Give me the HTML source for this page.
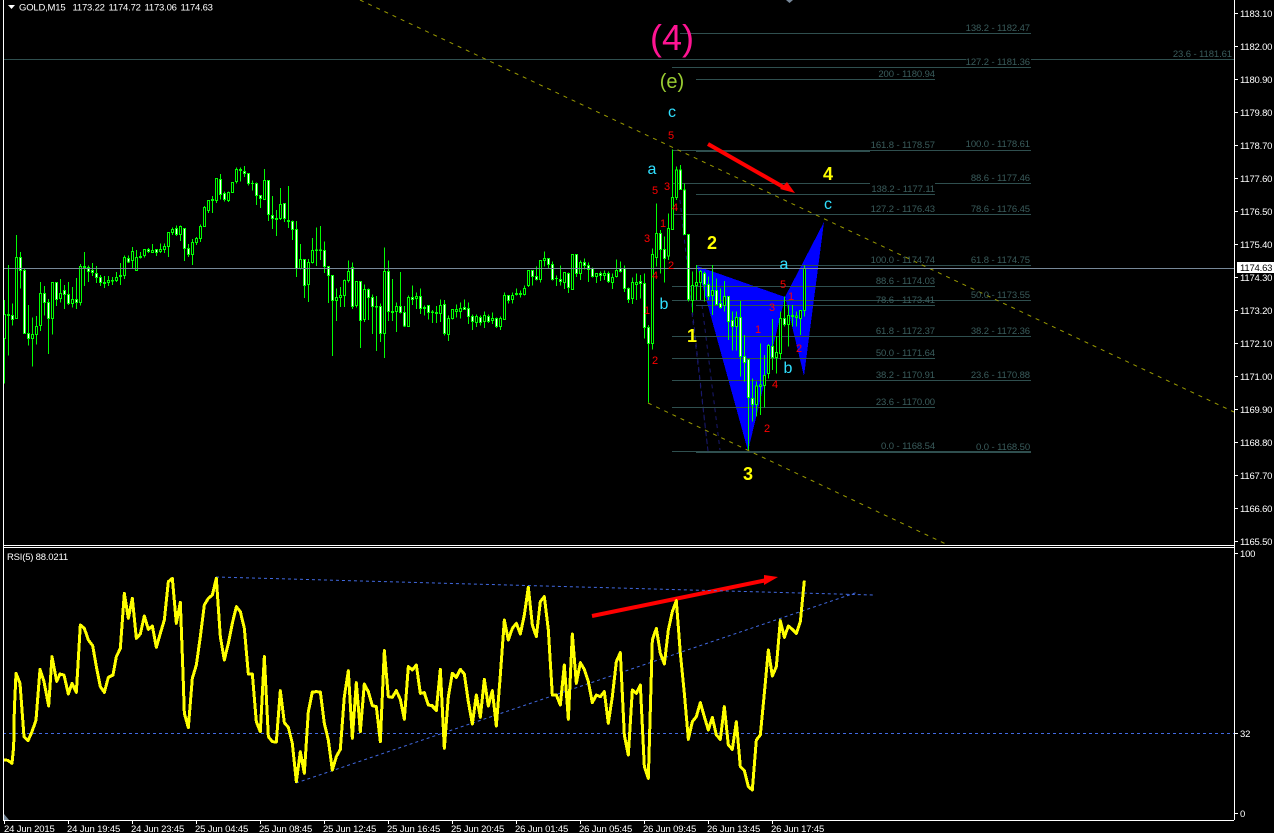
<!DOCTYPE html>
<html><head><meta charset="utf-8"><title>GOLD,M15</title>
<style>
html,body{margin:0;padding:0;background:#000;overflow:hidden}
svg{display:block}
text{font-family:"Liberation Sans",sans-serif;font-size:9.5px;fill:#fff;letter-spacing:-.2px}
.f text{fill:#3a5c5c;text-anchor:end;letter-spacing:-.1px}
.ax text{fill:#fff}
.t text{fill:#fff;letter-spacing:-.15px}
.r text{fill:#f00;font-size:11px;text-anchor:middle;letter-spacing:0}
.c text{fill:#30e0ff;font-size:16px;text-anchor:middle;letter-spacing:0}
.y text{fill:#ff0;font-size:18px;font-weight:bold;text-anchor:middle;letter-spacing:0}
.k path{vector-effect:non-scaling-stroke;stroke:#0f0;stroke-width:1}
</style></head><body>
<svg width="1274" height="833" viewBox="0 0 1274 833" xmlns="http://www.w3.org/2000/svg">
<rect width="1274" height="833" fill="#000"/>
<!-- harmonic pattern -->
<g fill="#0000ff" shape-rendering="crispEdges">
<polygon points="697,266 748,451 785,297"/>
<polygon points="785,297 824,222 804,376"/>
</g>
<g stroke="#191970" stroke-dasharray="4 4" fill="none">
<path d="M680 200L708 451M692 313L708 451M702 305L720 450"/>
</g>
<!-- fib lines -->
<g stroke="#2f4f4f" fill="none" shape-rendering="crispEdges">
<path d="M680 33.5H1031M3 59.5H966M1031 59.5H1234M672 67.5H1031M696 79.5H935M672 150.5H1031M696 151.5H870M672 183.5H870M935 183.5H1031M696 194.5H935M672 214.5H1031M696 265.5H1031M672 286.5H935M672 300.5H1031M696 305.5H935M672 336.5H1031M672 358.5H935M672 380.5H1031M672 407.5H935M672 451.5H1031M696 452.5H1031"/>
</g>
<!-- candles -->
<g class="k" transform="translate(.5,150) scale(1,.33333)" shape-rendering="crispEdges">
<path fill="none" d="M4 450V700M8 345V617M12 460V527M16 255V505M20 306V416M24 357V551M28 465V587M32 503V650M36 498V584M40 396V543M44 408V497M48 447V612M52 397V554M56 397V468M60 387V458M64 405V477M68 396V465M72 411V473M76 384V477M80 342V467M84 306V408M88 346V396M92 339V378M96 348V399M100 375V408M104 378V414M108 378V408M112 381V405M116 366V396M120 339V405M124 316V387M128 316V339M132 291V355M136 300V363M140 306V326M144 298V323M148 294V309M152 282V309M156 298V318M160 280V309M164 280V309M168 247V321M172 232V255M176 226V258M180 226V273M184 235V333M188 282V321M192 267V345M196 261V285M200 223V276M204 168V231M208 150V189M212 138V189M216 85V159M220 72V148M224 124V154M228 124V156M232 97V127M236 52V101M240 52V94M244 48V81M248 70V107M252 91V121M256 97V165M260 136V174M264 57V150M268 91V213M272 138V237M276 180V258M280 114V210M284 160V216M288 108V234M292 211V270M296 213V381M300 282V358M304 328V444M308 327V456M312 264V340M316 232V348M320 228V330M324 274V369M328 348V459"/>
<path fill="#fff" d="M11 497h2V509h-2zM19 322h2V361h-2zM23 361h2V551h-2zM27 551h2V566h-2zM43 430h2V458h-2zM47 458h2V506h-2zM55 397h2V449h-2zM63 422h2V434h-2zM67 433h2V461h-2zM75 448h2V458h-2zM87 352h2V365h-2zM91 361h2V368h-2zM95 370h2V382h-2zM99 382h2V398h-2zM127 325h2V336h-2zM147 298h2V304h-2zM155 299h2V307h-2zM175 235h2V253h-2zM183 235h2V295h-2zM187 295h2V313h-2zM219 88h2V133h-2zM223 130h2V148h-2zM243 64h2V71h-2zM247 70h2V101h-2zM255 100h2V136h-2zM259 137h2V145h-2zM267 91h2V193h-2zM271 196h2V205h-2zM283 160h2V205h-2zM291 214h2V238h-2zM295 238h2V355h-2zM303 328h2V406h-2zM323 302h2V349h-2zM327 349h2V376h-2z"/>
<path fill="#000" d="M3 494h2V565h-2zM7 494h2V497h-2zM15 322h2V505h-2zM31 554h2V566h-2zM35 530h2V554h-2zM39 430h2V527h-2zM51 397h2V506h-2zM59 430h2V446h-2zM71 448h2V461h-2zM79 349h2V458h-2zM83 349h2V353h-2zM103 397h2V401h-2zM107 391h2V398h-2zM111 391h2V393h-2zM115 382h2V391h-2zM119 376h2V380h-2zM123 322h2V377h-2zM131 304h2V331h-2zM135 322h2V361h-2zM139 319h2V323h-2zM143 298h2V316h-2zM151 301h2V307h-2zM159 298h2V304h-2zM163 289h2V299h-2zM167 247h2V289h-2zM171 238h2V247h-2zM179 229h2V253h-2zM191 277h2V313h-2zM195 265h2V277h-2zM199 229h2V265h-2zM203 172h2V229h-2zM207 152h2V181h-2zM211 148h2V152h-2zM215 85h2V151h-2zM227 127h2V151h-2zM231 97h2V127h-2zM235 58h2V94h-2zM239 58h2V61h-2zM251 100h2V101h-2zM263 91h2V149h-2zM275 205h2V208h-2zM279 163h2V205h-2zM287 211h2V214h-2zM299 328h2V355h-2zM307 337h2V403h-2zM311 302h2V338h-2zM315 300h2V302h-2zM319 300h2V302h-2z"/>
</g>
<g class="k" transform="translate(.5,220) scale(1,.33333)" shape-rendering="crispEdges">
<path fill="none" d="M332 165V408M336 205V303M340 201V261M344 178V261M348 121V187M352 127V267M356 184V262M360 184V384M364 193V306M368 205V300M372 223V342M376 228V393M380 250V366M384 82V414M388 121V303M392 177V303M396 247V336M400 156V280M404 258V321M408 226V321M412 196V255M416 217V267M420 205V282M424 256V286M428 255V298M432 270V309M436 258V309M440 238V306M444 240V347M448 286V363M452 267V298M456 253V292M460 247V295M464 238V270M468 247V312M472 283V330M476 283V321M480 286V316M484 274V324M488 283V309M492 277V312M496 292V324M500 289V330M504 217V300M508 226V250M512 217V250M516 205V226M520 211V232M524 196V226M528 151V201M532 151V196M536 139V181M540 121V187M544 94V139M548 114V145M552 124V181M556 166V198M560 136V196M564 157V207M568 157V219M572 103V210M576 103V171M580 121V180M584 115V148M588 127V186M592 142V172M596 160V189M600 154V183M604 151V180M608 154V189M612 160V207M616 118V172M620 124V157M624 136V216M628 202V249"/>
<path fill="#fff" d="M331 166h2V241h-2zM351 142h2V259h-2zM359 184h2V301h-2zM367 208h2V232h-2zM371 232h2V259h-2zM379 259h2V340h-2zM387 154h2V274h-2zM399 259h2V277h-2zM403 277h2V318h-2zM411 232h2V238h-2zM419 229h2V265h-2zM427 256h2V277h-2zM443 253h2V340h-2zM463 262h2V268h-2zM467 265h2V289h-2zM471 289h2V304h-2zM479 292h2V307h-2zM487 289h2V305h-2zM495 295h2V319h-2zM507 226h2V241h-2zM531 151h2V169h-2zM535 169h2V178h-2zM547 115h2V133h-2zM551 133h2V178h-2zM559 178h2V184h-2zM567 160h2V202h-2zM575 103h2V160h-2zM583 127h2V136h-2zM587 136h2V148h-2zM591 145h2V170h-2zM599 160h2V166h-2zM607 160h2V184h-2zM619 145h2V154h-2zM623 145h2V205h-2zM627 205h2V238h-2z"/>
<path fill="#000" d="M335 232h2V241h-2zM339 226h2V232h-2zM343 181h2V226h-2zM347 154h2V181h-2zM355 184h2V256h-2zM363 208h2V298h-2zM375 259h2V261h-2zM383 154h2V340h-2zM391 274h2V277h-2zM395 259h2V274h-2zM407 232h2V319h-2zM415 229h2V235h-2zM423 262h2V265h-2zM431 276h2V278h-2zM435 277h2V280h-2zM439 256h2V280h-2zM447 295h2V343h-2zM451 268h2V295h-2zM455 268h2V274h-2zM459 265h2V274h-2zM475 289h2V307h-2zM483 286h2V304h-2zM491 295h2V302h-2zM499 295h2V319h-2zM503 226h2V298h-2zM511 226h2V238h-2zM515 220h2V223h-2zM519 220h2V223h-2zM523 205h2V223h-2zM527 151h2V196h-2zM539 121h2V178h-2zM543 115h2V121h-2zM555 175h2V176h-2zM563 157h2V187h-2zM571 103h2V208h-2zM579 127h2V160h-2zM595 160h2V170h-2zM603 160h2V166h-2zM611 172h2V187h-2zM615 151h2V170h-2z"/>
</g>
<g class="k" transform="translate(.5,120) scale(1,.33333)" shape-rendering="crispEdges">
<path fill="none" d="M632 472V552M636 460V540M640 465V535M644 460V655M648 615V848M652 385V688M656 250V440M660 330V460M664 350V488M668 280V420M672 88V328M676 140V240M680 135V210M684 190V345M688 343V545M692 455V578M696 435V540M700 450V540M704 455V545M708 470V540M712 435V585M716 475V555M720 505V565M724 483V575M728 529V660M732 575V692M736 575V692M740 543V770M744 645V785M748 718V990M752 775V905M756 785V890M760 670V885M764 705V862M768 672V775M772 597V750M776 650V760M780 575V718M784 530V620M788 555V680M792 555V620M796 575V620M800 570V645M804 437V590"/>
<path fill="#fff" d="M639 484h2V490h-2zM643 490h2V622h-2zM647 622h2V670h-2zM659 340h2V388h-2zM663 388h2V415h-2zM679 150h2V208h-2zM683 210h2V343h-2zM687 343h2V538h-2zM703 460h2V493h-2zM707 493h2V530h-2zM715 512h2V553h-2zM719 550h2V562h-2zM727 529h2V604h-2zM731 601h2V619h-2zM739 592h2V709h-2zM743 709h2V727h-2zM747 718h2V832h-2zM751 835h2V853h-2zM771 679h2V712h-2zM783 595h2V613h-2z"/>
<path fill="#000" d="M631 487h2V535h-2zM635 487h2V493h-2zM651 403h2V670h-2zM655 340h2V412h-2zM667 325h2V408h-2zM671 232h2V328h-2zM675 150h2V233h-2zM691 497h2V541h-2zM695 488h2V497h-2zM699 455h2V488h-2zM711 512h2V527h-2zM723 529h2V556h-2zM735 592h2V619h-2zM755 798h2V853h-2zM759 795h2V800h-2zM763 766h2V797h-2zM767 676h2V760h-2zM775 697h2V712h-2zM779 595h2V700h-2zM787 586h2V613h-2zM791 586h2V590h-2zM795 588h2V592h-2zM799 571h2V595h-2zM803 445h2V571h-2z"/>
</g>
<!-- channel lines -->
<g stroke="#9a9a00" stroke-dasharray="4 5" fill="none">
<path d="M360 0L1234 412"/>
<path d="M648 403L948 545"/>
</g>
<!-- price line -->
<path d="M3 268.5H1234" stroke="#778899" shape-rendering="crispEdges"/>
<!-- arrows -->
<g fill="#f00">
<path d="M708 144L785 188" stroke="#f00" stroke-width="4" fill="none"/>
<polygon points="795,193 780,189 787,182"/>
<path d="M592 616L767 580" stroke="#f00" stroke-width="4" fill="none"/>
<polygon points="778,577 764,575 764,585"/>
</g>
<!-- RSI -->
<g stroke="#4169e1" stroke-dasharray="3 3" fill="none">
<path d="M3 733.5H1234" shape-rendering="crispEdges"/>
<path d="M216 577L873 595"/>
<path d="M296 783L858 592"/>
</g>
<g fill="none" stroke="#ff0" stroke-linejoin="round" shape-rendering="crispEdges">
<polyline transform="translate(0,540) scale(.33333)" stroke-width="9" points="12,660 24,661 36,670 41,620 43,510 48,400 60,430 72,590 84,602 96,575 108,540 120,388 132,425 146,498 156,350 170,424 180,402 192,405 205,462 216,430 229,457 241,255 253,265 265,300 278,317 290,385 301,440 313,457 325,412 339,405 349,350 361,325 373,160 385,235 397,175 409,295 421,282 433,228 445,268 457,258 469,322 481,280 493,240 505,125 517,115 529,250 541,187 549,400 553,520 565,563 577,415 589,375 601,290 613,195 625,175 637,165 649,115 661,290 673,360 685,310 697,250 709,200 721,215 733,265 745,402 757,402 769,545 781,575 793,350 805,590 817,605 829,606 841,452 853,548 865,562 877,610 889,725 901,635 913,700 925,515 937,456 949,455 961,456 973,550 985,600 997,690 1009,650 1021,628 1033,470 1045,392 1057,595 1069,428 1081,575 1093,432 1105,455 1117,497 1129,500 1141,605 1153,332 1165,470 1177,472 1189,452 1201,478 1213,538 1225,380 1237,390 1249,375 1261,460 1273,458 1285,495 1297,497 1309,510 1321,390"/>
<polyline transform="translate(430,560) scale(.33333)" stroke-width="9" points="7,440 19,452 31,328 43,565 55,410 67,340 79,352 91,328 103,342 115,425 127,492 139,405 151,472 163,358 175,438 187,392 199,498 211,345 223,180 235,240 247,205 259,190 271,222 283,165 295,82 307,195 319,230 331,125 343,110 355,210 367,405 379,405 391,435 403,315 415,478 427,222 439,370 451,308 463,328 475,365 487,428 499,405 511,410 523,395 535,490 547,410 559,305 571,278 583,525 595,585 607,390 619,400 631,375 643,620 655,655 667,240 679,205 691,280 703,312 715,210 727,155 739,122 751,280 763,400 775,538 787,485 799,470 811,428 823,470 835,510 847,472 859,525 871,538 883,440 895,555 907,568 919,485 931,620 943,632 955,680 967,690 979,540 991,525 1003,400 1015,270 1027,348 1039,320 1051,182 1063,232 1075,198 1087,208 1099,220 1111,185 1123,62"/>
</g>
<!-- frame -->
<g stroke="#fff" fill="none" shape-rendering="crispEdges">
<path d="M3.5 0V820M1234.5 0V820M3 545.5H1234M3 547.5H1234M3 820.5H1234"/>
<path d="M1234 13.5h4M1234 46.5h4M1234 79.5h4M1234 112.5h4M1234 145.5h4M1234 178.5h4M1234 211.5h4M1234 244.5h4M1234 277.5h4M1234 310.5h4M1234 343.5h4M1234 376.5h4M1234 409.5h4M1234 442.5h4M1234 475.5h4M1234 508.5h4M1234 541.5h4M1234 553.5h4M1234 733.5h4M1234 813.5h4"/>
<path d="M4.5 820v4M68.5 820v4M132.5 820v4M196.5 820v4M260.5 820v4M324.5 820v4M388.5 820v4M452.5 820v4M516.5 820v4M580.5 820v4M644.5 820v4M708.5 820v4M772.5 820v4"/>
</g>
<polygon points="4,814 9,820 4,820" fill="#778899"/>
<polygon points="786,0 793,0 789.5,3" fill="#778899"/>
<polygon points="8,5 15,5 11.5,9" fill="#fff"/>
<!-- header -->
<text x="19" y="10.5">GOLD,M15</text>
<text x="72.5" y="10.5">1173.22</text>
<text x="108.5" y="10.5">1174.72</text>
<text x="144.5" y="10.5">1173.06</text>
<text x="180.5" y="10.5">1174.63</text>
<text x="7" y="560">RSI(5) 88.0211</text>
<!-- fib labels -->
<g class="f">
<text x="1030" y="31">138.2 - 1182.47</text>
<text x="1030" y="65">127.2 - 1181.36</text>
<text x="1232" y="57">23.6  - 1181.61</text>
<text x="935" y="77">200 - 1180.94</text>
<text x="1030" y="147">100.0 - 1178.61</text>
<text x="935" y="148">161.8 - 1178.57</text>
<text x="1030" y="181">88.6 - 1177.46</text>
<text x="935" y="192">138.2 - 1177.11</text>
<text x="1030" y="212">78.6 - 1176.45</text>
<text x="935" y="212">127.2 - 1176.43</text>
<text x="1030" y="263">61.8 - 1174.75</text>
<text x="935" y="263">100.0 - 1174.74</text>
<text x="935" y="284">88.6 - 1174.03</text>
<text x="1030" y="298">50.0 - 1173.55</text>
<text x="935" y="303">78.6 - 1173.41</text>
<text x="1030" y="334">38.2 - 1172.36</text>
<text x="935" y="334">61.8 - 1172.37</text>
<text x="935" y="356">50.0 - 1171.64</text>
<text x="1030" y="378">23.6 - 1170.88</text>
<text x="935" y="378">38.2 - 1170.91</text>
<text x="935" y="405">23.6 - 1170.00</text>
<text x="1030" y="450">0.0 - 1168.50</text>
<text x="935" y="449">0.0 - 1168.54</text>
</g>
<!-- elliott labels -->
<text x="672" y="50" text-anchor="middle" style="font-size:36px;fill:#ff1493;letter-spacing:0">(4)</text>
<text x="672" y="88" text-anchor="middle" style="font-size:20px;fill:#9acd32;letter-spacing:0">(e)</text>
<g class="r">
<text x="671" y="139">5</text><text x="655" y="194">5</text><text x="667" y="190">3</text><text x="663" y="227">1</text><text x="675" y="211">4</text><text x="647" y="242">3</text><text x="671" y="269">2</text><text x="655" y="279">4</text><text x="655" y="364">2</text><text x="647" y="314">1</text><text x="783" y="288">5</text><text x="772" y="311">3</text><text x="758" y="333">1</text><text x="791" y="300">1</text><text x="775" y="388">4</text><text x="767" y="432">2</text><text x="799" y="352">2</text>
</g>
<g class="c">
<text x="672" y="117">c</text><text x="652" y="174">a</text><text x="664" y="309">b</text><text x="828" y="209">c</text><text x="784" y="269">a</text><text x="788" y="373">b</text>
</g>
<g class="y">
<text x="712" y="249">2</text><text x="692" y="342">1</text><text x="828" y="180">4</text><text x="748" y="480">3</text>
</g>
<!-- price axis -->
<g class="ax">
<text x="1240" y="17">1183.10</text><text x="1240" y="50">1182.00</text><text x="1240" y="83">1180.90</text><text x="1240" y="116">1179.80</text><text x="1240" y="149">1178.70</text><text x="1240" y="182">1177.60</text><text x="1240" y="215">1176.50</text><text x="1240" y="248">1175.40</text><text x="1240" y="281">1174.30</text><text x="1240" y="314">1173.20</text><text x="1240" y="347">1172.10</text><text x="1240" y="380">1171.00</text><text x="1240" y="413">1169.90</text><text x="1240" y="446">1168.80</text><text x="1240" y="479">1167.70</text><text x="1240" y="512">1166.60</text><text x="1240" y="545">1165.50</text>
<text x="1240" y="557">100</text><text x="1240" y="737">32</text><text x="1240" y="817">0</text>
</g>
<rect x="1237" y="262" width="37" height="11" fill="#fff"/>
<text x="1240" y="271" style="fill:#000">1174.63</text>
<!-- time axis -->
<g class="t">
<text x="4" y="832">24 Jun 2015</text><text x="67" y="832">24 Jun 19:45</text><text x="131" y="832">24 Jun 23:45</text><text x="195" y="832">25 Jun 04:45</text><text x="259" y="832">25 Jun 08:45</text><text x="323" y="832">25 Jun 12:45</text><text x="387" y="832">25 Jun 16:45</text><text x="451" y="832">25 Jun 20:45</text><text x="515" y="832">26 Jun 01:45</text><text x="579" y="832">26 Jun 05:45</text><text x="643" y="832">26 Jun 09:45</text><text x="707" y="832">26 Jun 13:45</text><text x="771" y="832">26 Jun 17:45</text>
</g>
</svg>
</body></html>
